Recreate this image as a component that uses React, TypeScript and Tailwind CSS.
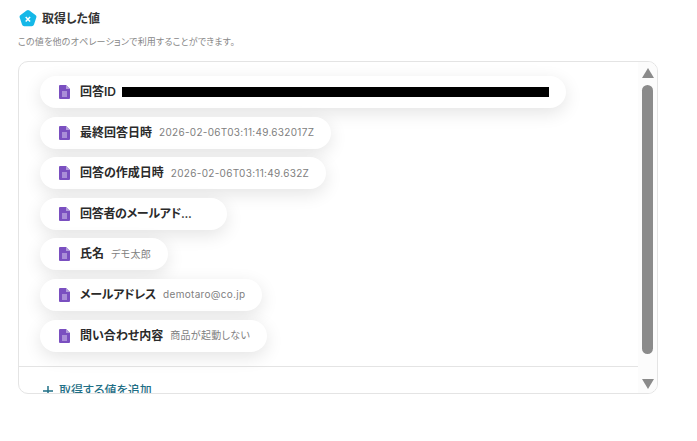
import React from 'react';

const FormIcon = () => (
  <svg width="11" height="14" viewBox="0 0 11 14" className="shrink-0">
    <path d="M1 0H7L11 4V13A1 1 0 0 1 10 14H1A1 1 0 0 1 0 13V1A1 1 0 0 1 1 0Z" fill="#7a4fc0" />
    <path d="M7 0L11 4H7Z" fill="#b39ddb" />
    <rect x="3" y="6.5" width="5" height="1" fill="#d9cdf0" />
    <rect x="3" y="8.5" width="5" height="1" fill="#d9cdf0" />
    <rect x="3" y="10.5" width="5" height="1" fill="#d9cdf0" />
  </svg>
);

type PillProps = { label: string; value?: string; mask?: boolean; wide?: boolean; tight?: boolean };

const Pill = ({ label, value, mask, wide, tight }: PillProps) => (
  <div className={`flex h-8 items-center rounded-full bg-white pl-[19px] pr-[17px] shadow-[0_5px_18px_rgba(0,0,0,0.11)] ${wide ? 'w-[187px]' : 'w-fit'}`}>
    <FormIcon />
    <span className={`ml-[10px] text-[12px] font-semibold text-[#2a2a2a] ${tight ? 'tracking-[-0.3px]' : ''}`}>{label}</span>
    {mask && <div className="ml-[6px] h-[10px] w-[427px] bg-black" />}
    {value && <span className="ml-[7px] text-[10px] tracking-[0.3px] text-[#808080]">{value}</span>}
  </div>
);

export default function App() {
  const rows: PillProps[] = [
    { label: '最終回答日時', value: '2026-02-06T03:11:49.632017Z' },
    { label: '回答の作成日時', value: '2026-02-06T03:11:49.632Z' },
    { label: '回答者のメールアド...', wide: true, tight: true },
    { label: '氏名', value: 'デモ太郎' },
    { label: 'メールアドレス', value: 'demotaro@co.jp', tight: true },
    { label: '問い合わせ内容', value: '商品が起動しない' },
  ];

  return (
    <div className="h-[441px] w-[697px] overflow-hidden bg-white pl-[18px] pt-[9px] font-['Inter','Noto_Sans_CJK_JP',sans-serif] [font-feature-settings:'palt']">
      <div className="flex h-[18px] items-center">
        <svg width="18" height="17" viewBox="0 0 18 17" className="ml-[1px] shrink-0">
          <path d="M7.6 0.6a2.4 2.4 0 0 1 2.8 0l6 4.3a2.4 2.4 0 0 1 .9 2.7l-2.3 7a2.4 2.4 0 0 1-2.3 1.7H5.3A2.4 2.4 0 0 1 3 14.6l-2.3-7a2.4 2.4 0 0 1 .9-2.7Z" fill="#15b8e8" />
          <path d="M6.7 7l4.4 4.6M11.1 7L6.7 11.6" stroke="#fff" strokeWidth="1.5" />
        </svg>
        <span className="ml-[5px] mt-[2px] text-[12px] font-semibold text-[#333333]">取得した値</span>
      </div>
      <p className="mt-[6px] text-[9px] leading-[18px] tracking-[0.2px] text-[#888888]">この値を他のオペレーションで利用することができます。</p>
      <div className="mt-[10px] flex h-[333px] w-[640px] overflow-hidden rounded-[10px] border border-[#e4e4e4]">
        <div className="flex min-w-0 flex-1 flex-col">
          <div className="flex h-[305px] shrink-0 flex-col gap-[8.6px] border-b border-[#e4e4e4] pl-[21px] pt-[14px]">
            <Pill label="回答ID" mask />
            {rows.map((row) => (
              <Pill key={row.label} {...row} />
            ))}
          </div>
          <div className="flex items-center pl-[23px] pt-[15px] text-[12px] font-medium text-[#1f6f86]">
            <svg width="12" height="12" viewBox="0 0 12 12" className="shrink-0">
              <path d="M6 1V11M1 6H11" stroke="#1f6f86" strokeWidth="1.5" />
            </svg>
            <span className="ml-[5px]">取得する値を追加</span>
          </div>
        </div>
        <div className="flex w-[19px] shrink-0 flex-col items-center bg-[#fcfcfc] pt-[6px]">
          <div className="h-0 w-0 border-x-[6px] border-b-[10px] border-x-transparent border-b-[#8b8b8b]" />
          <div className="mt-[7px] h-[269px] w-[11px] rounded-[6px] bg-[#8b8b8b]" />
          <div className="mt-[25px] h-0 w-0 border-x-[6px] border-t-[10px] border-x-transparent border-t-[#8b8b8b]" />
        </div>
      </div>
    </div>
  );
}
